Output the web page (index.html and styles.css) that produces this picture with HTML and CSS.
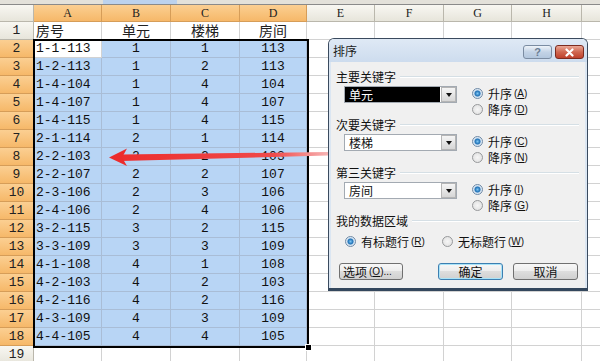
FILE: index.html
```html
<!DOCTYPE html>
<html lang="zh-CN">
<head>
    <meta charset="UTF-8">
    <meta name="viewport" content="width=device-width, initial-scale=1.0">
    <title>排序</title>
    <link rel="stylesheet" href="styles.css">
</head>
<body>
<div class="sheet">
    <div class="toolbar-edge"><span class="toolbar-tab"></span></div>
    <div class="grid" id="grid"></div>

    <div class="selection"><span class="fill-handle"></span></div>

    <svg class="arrow" width="600" height="361" viewBox="0 0 600 361">
        <defs>
            <linearGradient id="fade" gradientUnits="userSpaceOnUse" x1="110" y1="0" x2="328" y2="0">
                <stop offset="0" stop-color="#ec2c2c"/>
                <stop offset="0.75" stop-color="#f04a4a"/>
                <stop offset="1" stop-color="#f7b4b4"/>
            </linearGradient>
        </defs>
        <polygon points="121,154.5 328,152 328,155.5 121,161" fill="url(#fade)"/>
        <polygon points="109,157.5 127,148.5 122,157.5 127,166" fill="#ec2c2c"/>
    </svg>

    <div class="dialog">
        <div class="dialog-title">
            <span class="dialog-caption">排序</span>
            <span class="cap-btn help">?</span>
            <span class="cap-btn close">
                <svg width="11" height="9" viewBox="0 0 11 9"><path d="M2.5 1.5 L8.5 7.5 M8.5 1.5 L2.5 7.5" stroke="#fff" stroke-width="2.2" stroke-linecap="round"/></svg>
            </span>
        </div>
        <div class="dialog-body">
            <div class="group">
                <div class="group-title">主要关键字</div>
                <div class="group-row">
                    <div class="combo"><span class="combo-text selected">单元</span><span class="combo-btn"></span></div>
                    <div class="radio-col">
                        <div class="radio"><span class="dot on"></span>升序<span class="key">(<u>A</u>)</span></div>
                        <div class="radio"><span class="dot"></span>降序<span class="key">(<u>D</u>)</span></div>
                    </div>
                </div>
            </div>
            <div class="group">
                <div class="group-title">次要关键字</div>
                <div class="group-row">
                    <div class="combo"><span class="combo-text">楼梯</span><span class="combo-btn"></span></div>
                    <div class="radio-col">
                        <div class="radio"><span class="dot on"></span>升序<span class="key">(<u>C</u>)</span></div>
                        <div class="radio"><span class="dot"></span>降序<span class="key">(<u>N</u>)</span></div>
                    </div>
                </div>
            </div>
            <div class="group">
                <div class="group-title">第三关键字</div>
                <div class="group-row">
                    <div class="combo"><span class="combo-text">房间</span><span class="combo-btn"></span></div>
                    <div class="radio-col">
                        <div class="radio"><span class="dot on"></span>升序<span class="key">(<u>I</u>)</span></div>
                        <div class="radio"><span class="dot"></span>降序<span class="key">(<u>G</u>)</span></div>
                    </div>
                </div>
            </div>
            <div class="group-title">我的数据区域</div>
            <div class="header-row">
                <div class="radio wide"><span class="dot on"></span>有标题行<span class="key">(<u>R</u>)</span></div>
                <div class="radio wide"><span class="dot"></span>无标题行<span class="key">(<u>W</u>)</span></div>
            </div>
            <div class="button-row">
                <span class="btn options">选项<span class="key">(<u>O</u>)...</span></span>
                <span class="btn default">确定</span>
                <span class="btn">取消</span>
            </div>
        </div>
    </div>
</div>
<script>
    const data = [
        ["房号", "单元", "楼梯", "房间"],
        ["1-1-113", "1", "1", "113"],
        ["1-2-113", "1", "2", "113"],
        ["1-4-104", "1", "4", "104"],
        ["1-4-107", "1", "4", "107"],
        ["1-4-115", "1", "4", "115"],
        ["2-1-114", "2", "1", "114"],
        ["2-2-103", "2", "2", "103"],
        ["2-2-107", "2", "2", "107"],
        ["2-3-106", "2", "3", "106"],
        ["2-4-106", "2", "4", "106"],
        ["3-2-115", "3", "2", "115"],
        ["3-3-109", "3", "3", "109"],
        ["4-1-108", "4", "1", "108"],
        ["4-2-103", "4", "2", "103"],
        ["4-2-116", "4", "2", "116"],
        ["4-3-109", "4", "3", "109"],
        ["4-4-105", "4", "4", "105"]
    ];
    // last column is only partly on screen, its letter is out of view
    const letters = ["A", "B", "C", "D", "E", "F", "G", "H", ""];
    const grid = document.getElementById("grid");

    function addCell(cls, text) {
        const div = document.createElement("div");
        div.className = cls;
        if (text) div.textContent = text;
        grid.appendChild(div);
    }

    addCell("hdr corner");
    letters.forEach(function (letter, i) {
        addCell(i < 4 ? "hdr col-hdr picked" : "hdr col-hdr", letter);
    });

    for (let r = 1; r <= 19; r++) {
        const inSelection = r >= 2 && r <= 18;
        addCell(inSelection ? "hdr row-hdr picked" : "hdr row-hdr", String(r));
        const values = data[r - 1] || [];
        for (let c = 0; c < letters.length; c++) {
            let cls = "cell";
            if (c === 0) cls += " left";
            else if (c < 4) cls += " center";
            if (inSelection && c < 4 && !(r === 2 && c === 0)) cls += " sel";
            if (r === 1) cls += " title";
            addCell(cls, values[c]);
        }
    }
</script>
</body>
</html>
```
FILE: styles.css
```css
body {
    margin: 0;
    background: #fff;
    font-family: "Liberation Mono", "Noto Sans CJK SC", monospace;
    overflow: hidden;
}
.sheet {
    position: relative;
    width: 600px;
    height: 361px;
    overflow: hidden;
}
.toolbar-edge {
    display: flex;
    height: 4px;
    background: #e3e1da;
    border-bottom: 1px solid #8a8a8a;
}
.toolbar-tab {
    margin-left: 103px;
    width: 74px;
    background: #bcd2ee;
}

/* spreadsheet grid */
.grid {
    display: grid;
    grid-template-columns: 34px 68px 69px 69px 67px 68px 69px 68px 70px 68px;
    grid-template-rows: 17px;
    grid-auto-rows: 18px;
}
.cell {
    box-sizing: border-box;
    border-right: 1px solid #d2d2d2;
    border-bottom: 1px solid #d2d2d2;
    font-size: 13px;
    line-height: 18px;
    color: #111;
    white-space: nowrap;
    overflow: hidden;
}
.left {
    padding-left: 2px;
}
.center {
    text-align: center;
}
.sel {
    background: #b8d5f5;
    border-color: #a9bdd6;
}
.title {
    font-family: "Noto Sans CJK SC", sans-serif;
    font-size: 14px;
    line-height: 17px;
    color: #222;
    overflow: visible;
}
.hdr {
    box-sizing: border-box;
    background: linear-gradient(#f8f7f2, #e7e5db);
    border-right: 1px solid #bab7ac;
    border-bottom: 1px solid #bab7ac;
    text-align: center;
    color: #222;
    white-space: nowrap;
    overflow: hidden;
}
.col-hdr {
    font-family: "Liberation Serif", serif;
    font-size: 12px;
    line-height: 16px;
}
.row-hdr {
    font-size: 13px;
    line-height: 18px;
}
.picked {
    background: linear-gradient(#fbcf92, #f6b869);
    border-color: #d69d58;
}

/* selection outline */
.selection {
    position: absolute;
    left: 33px;
    top: 39px;
    width: 276px;
    height: 309px;
    box-sizing: border-box;
    border: 2px solid #000;
}
.fill-handle {
    position: absolute;
    right: -5px;
    bottom: -5px;
    width: 5px;
    height: 5px;
    background: #000;
    border: 1px solid #fff;
}
.arrow {
    position: absolute;
    left: 0;
    top: 0;
    pointer-events: none;
}

/* sort dialog */
.dialog {
    position: absolute;
    left: 328px;
    top: 38px;
    width: 260px;
    height: 253px;
    box-sizing: border-box;
    border: 1px solid #3a4a5e;
    border-bottom: 3px solid #34475d;
    border-radius: 6px 6px 0 0;
    background: #f0f0f0;
    font-family: "Noto Sans CJK SC", sans-serif;
    font-size: 12px;
    color: #111;
    box-shadow: inset 2px 0 0 #dbe6f2, inset -2px 0 0 #dbe6f2;
}
.dialog-title {
    display: flex;
    align-items: center;
    gap: 3px;
    height: 23px;
    padding: 0 3px 0 4px;
    background: linear-gradient(#dfe9f5, #cddcee);
    border-radius: 5px 5px 0 0;
}
.dialog-caption {
    flex: 1;
    font-size: 12px;
    color: #222;
}
.cap-btn {
    display: flex;
    align-items: center;
    justify-content: center;
    width: 29px;
    height: 14px;
    box-sizing: border-box;
    border-radius: 3px;
    margin-top: 3px;
}
.help {
    border: 1px solid #7b8ca2;
    background: linear-gradient(#eef3f9, #c3d3e6 50%, #b3c7de);
    color: #6a7d94;
    font-family: "Liberation Sans", sans-serif;
    font-size: 11px;
    font-weight: bold;
}
.close {
    border: 1px solid #7c2b1f;
    background: linear-gradient(#eba896, #d06750 50%, #bf412c);
}
.dialog-body {
    padding: 6px 8px 0 7px;
}
.group-title {
    display: flex;
    align-items: center;
    gap: 4px;
    height: 16px;
    white-space: nowrap;
}
.group-title::after {
    content: "";
    flex: 1;
    border-top: 1px solid #d5dfe5;
    border-bottom: 1px solid #fff;
    margin-top: 1px;
}
.group-row {
    display: flex;
    gap: 15px;
    height: 32px;
}
.combo {
    display: flex;
    width: 113px;
    height: 17px;
    box-sizing: border-box;
    margin: 2px 0 0 8px;
    border: 1px solid #a3aab2;
    background: #fff;
}
.combo-text {
    flex: 1;
    padding-left: 4px;
    line-height: 15px;
}
.combo-text.selected {
    background: #000;
    color: #fff;
    margin: 0 1px 0 0;
}
.combo-btn {
    display: flex;
    align-items: center;
    justify-content: center;
    width: 15px;
    box-sizing: border-box;
    border: 1px solid #b5b5b5;
    background: linear-gradient(#f5f5f5, #d6d6d6);
}
.combo-btn::after {
    content: "";
    border-left: 3px solid transparent;
    border-right: 3px solid transparent;
    border-top: 4px solid #111;
}
.radio-col {
    display: flex;
    flex-direction: column;
    padding-top: 1px;
}
.radio {
    display: flex;
    align-items: center;
    height: 16px;
    white-space: nowrap;
}
.dot {
    width: 11px;
    height: 11px;
    box-sizing: border-box;
    margin-right: 5px;
    border: 1px solid #97999b;
    border-radius: 50%;
    background: radial-gradient(circle, #f6f6f6 0, #e2e2e2 5px);
}
.dot.on {
    border-color: #6f8aa6;
    background: radial-gradient(circle, #7cc4f2 0, #1d6fb4 2.6px, #c8dcef 3.4px, #eef3f8 5px);
}
.key {
    margin-left: 2px;
    font-family: "Liberation Sans", sans-serif;
    font-size: 10px;
}
.header-row {
    display: flex;
    height: 16px;
    margin-top: 5px;
    padding-left: 9px;
}
.radio.wide {
    width: 97px;
}
.button-row {
    display: flex;
    margin-top: 14px;
    padding-left: 3px;
}
.btn {
    display: flex;
    align-items: center;
    justify-content: center;
    width: 65px;
    height: 17px;
    box-sizing: border-box;
    border: 1px solid #707070;
    border-radius: 3px;
    background: linear-gradient(#f7f7f7, #ececec 50%, #dddddd 50%, #d0d0d0);
    font-size: 12px;
}
.btn.options {
    width: 64px;
    margin-right: 35px;
    justify-content: flex-start;
    padding-left: 3px;
}
.btn.default {
    margin-right: 10px;
    border-color: #3c7fb1;
    box-shadow: inset 0 0 0 1px #a9e3f8;
}
```
